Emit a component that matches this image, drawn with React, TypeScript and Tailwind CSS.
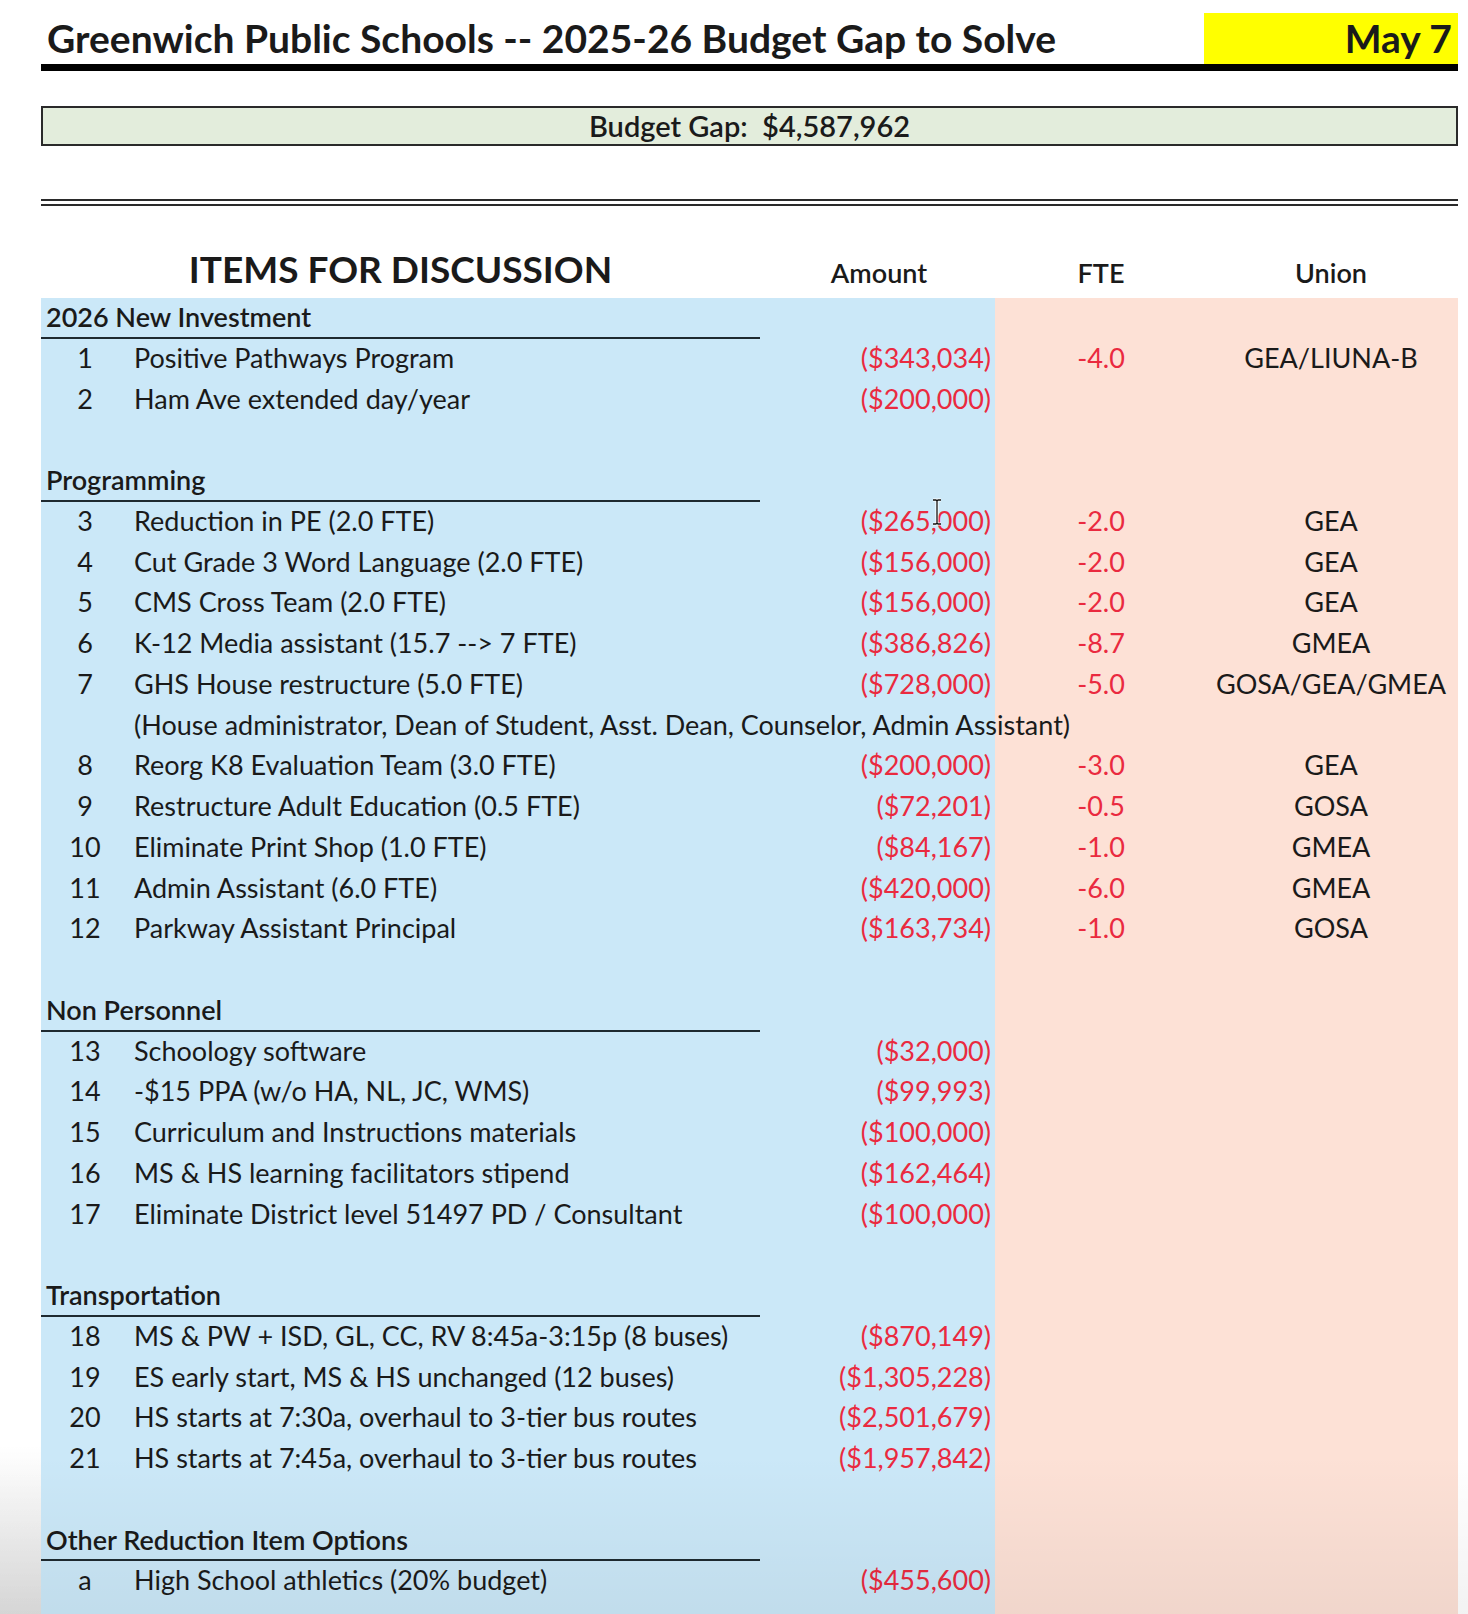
import React from "react";

type Row =
  | { kind: "section"; label: string }
  | { kind: "blank" }
  | { kind: "item"; num?: string; desc: string; amount?: string; fte?: string; union?: string };

const rows: Row[] = [
  { kind: "section", label: "2026 New Investment" },
  { kind: "item", num: "1", desc: "Positive Pathways Program", amount: "($343,034)", fte: "-4.0", union: "GEA/LIUNA-B" },
  { kind: "item", num: "2", desc: "Ham Ave extended day/year", amount: "($200,000)" },
  { kind: "blank" },
  { kind: "section", label: "Programming" },
  { kind: "item", num: "3", desc: "Reduction in PE (2.0 FTE)", amount: "($265,000)", fte: "-2.0", union: "GEA" },
  { kind: "item", num: "4", desc: "Cut Grade 3 Word Language (2.0 FTE)", amount: "($156,000)", fte: "-2.0", union: "GEA" },
  { kind: "item", num: "5", desc: "CMS Cross Team (2.0 FTE)", amount: "($156,000)", fte: "-2.0", union: "GEA" },
  { kind: "item", num: "6", desc: "K-12 Media assistant (15.7 --> 7 FTE)", amount: "($386,826)", fte: "-8.7", union: "GMEA" },
  { kind: "item", num: "7", desc: "GHS House restructure (5.0 FTE)", amount: "($728,000)", fte: "-5.0", union: "GOSA/GEA/GMEA" },
  { kind: "item", desc: "(House administrator, Dean of Student, Asst. Dean, Counselor, Admin Assistant)" },
  { kind: "item", num: "8", desc: "Reorg K8 Evaluation Team (3.0 FTE)", amount: "($200,000)", fte: "-3.0", union: "GEA" },
  { kind: "item", num: "9", desc: "Restructure Adult Education (0.5 FTE)", amount: "($72,201)", fte: "-0.5", union: "GOSA" },
  { kind: "item", num: "10", desc: "Eliminate Print Shop (1.0 FTE)", amount: "($84,167)", fte: "-1.0", union: "GMEA" },
  { kind: "item", num: "11", desc: "Admin Assistant (6.0 FTE)", amount: "($420,000)", fte: "-6.0", union: "GMEA" },
  { kind: "item", num: "12", desc: "Parkway Assistant Principal", amount: "($163,734)", fte: "-1.0", union: "GOSA" },
  { kind: "blank" },
  { kind: "section", label: "Non Personnel" },
  { kind: "item", num: "13", desc: "Schoology software", amount: "($32,000)" },
  { kind: "item", num: "14", desc: "-$15 PPA (w/o HA, NL, JC, WMS)", amount: "($99,993)" },
  { kind: "item", num: "15", desc: "Curriculum and Instructions materials", amount: "($100,000)" },
  { kind: "item", num: "16", desc: "MS & HS learning facilitators stipend", amount: "($162,464)" },
  { kind: "item", num: "17", desc: "Eliminate District level 51497 PD / Consultant", amount: "($100,000)" },
  { kind: "blank" },
  { kind: "section", label: "Transportation" },
  { kind: "item", num: "18", desc: "MS & PW + ISD, GL, CC, RV 8:45a-3:15p (8 buses)", amount: "($870,149)" },
  { kind: "item", num: "19", desc: "ES early start, MS & HS unchanged (12 buses)", amount: "($1,305,228)" },
  { kind: "item", num: "20", desc: "HS starts at 7:30a, overhaul to 3-tier bus routes", amount: "($2,501,679)" },
  { kind: "item", num: "21", desc: "HS starts at 7:45a, overhaul to 3-tier bus routes", amount: "($1,957,842)" },
  { kind: "blank" },
  { kind: "section", label: "Other Reduction Item Options" },
  { kind: "item", num: "a", desc: "High School athletics (20% budget)", amount: "($455,600)" },
];

function App() {
  return (
    <div className="relative w-[1468px] h-[1614px] overflow-hidden bg-white flex flex-col pl-[41px] pr-[10px] text-[#1a1a1a] font-['Lato','Liberation_Sans',sans-serif]">
      {/* title bar */}
      <div className="mt-[13px] flex items-stretch h-[58px] border-b-[7px] border-black">
        <div className="flex-1 pl-[6px] flex items-center text-[39px] font-bold">
          Greenwich Public Schools -- 2025-26 Budget Gap to Solve
        </div>
        <div className="w-[254px] bg-[#ffff00] flex items-center justify-end pr-[6px] text-[39px] font-bold">
          May 7
        </div>
      </div>

      {/* budget gap box */}
      <div className="mt-[35px] h-[40px] bg-[#e3eddc] border-2 border-[#2a2a2a] flex items-center justify-center text-[29px] font-semibold">
        Budget Gap:&nbsp; $4,587,962
      </div>

      {/* double rule */}
      <div className="mt-[53px] h-[7px] border-y-2 border-[#2a2a2a]" />

      {/* column headers */}
      <div className="mt-[40px] h-[52px] flex items-center">
        <div className="w-[719px] text-center text-[37px] font-bold pb-[6px]">ITEMS FOR DISCUSSION</div>
        <div className="w-[238px] text-center text-[27px] font-semibold pt-[2px]">Amount</div>
        <div className="w-[206px] text-center text-[27px] font-semibold pt-[2px]">FTE</div>
        <div className="flex-1 text-center text-[27px] font-semibold pt-[2px]">Union</div>
      </div>

      {/* table body */}
      <div className="flex-1 bg-[linear-gradient(to_right,#cbe8f8_954px,#fde1d6_954px)] text-[27px]">
        {rows.map((r, i) => {
          if (r.kind === "section") {
            return (
              <div key={i} className="h-[40.75px] flex">
                <div className="w-[719px] pl-[5px] flex items-center font-semibold border-b-2 border-[#1e2a30]">
                  {r.label}
                </div>
              </div>
            );
          }
          if (r.kind === "blank") {
            return <div key={i} className="h-[40.75px]" />;
          }
          return (
            <div key={i} className="h-[40.75px] flex items-center pb-[2px]">
              <div className="w-[88px] text-center">{r.num}</div>
              <div className="w-[630px] pl-[5px] whitespace-nowrap">{r.desc}</div>
              <div className="w-[239px] text-right pr-[7px] text-[#ea2a3f]">{r.amount}</div>
              <div className="w-[206px] text-center text-[#ea2a3f]">{r.fte}</div>
              <div className="flex-1 text-center">{r.union}</div>
            </div>
          );
        })}
      </div>

      {/* mouse cursor over row 3 */}
      <svg className="absolute left-[931px] top-[498px]" width="12" height="28" viewBox="0 0 12 28">
        <path d="M2 2h3l1 1 1-1h3M6 3v22M2 26h3l1-1 1 1h3" fill="none" stroke="#fff" strokeWidth="3" />
        <path d="M2 2h3l1 1 1-1h3M6 3v22M2 26h3l1-1 1 1h3" fill="none" stroke="#111" strokeWidth="1.3" />
      </svg>

      {/* video vignette at the bottom */}
      <div className="pointer-events-none absolute left-0 right-0 bottom-0 h-[160px] bg-gradient-to-t from-black/[0.05] to-transparent" />
      <div className="pointer-events-none absolute left-0 w-[41px] bottom-0 h-[170px] bg-gradient-to-t from-black/[0.12] to-transparent" />
    </div>
  );
}

export default App;
